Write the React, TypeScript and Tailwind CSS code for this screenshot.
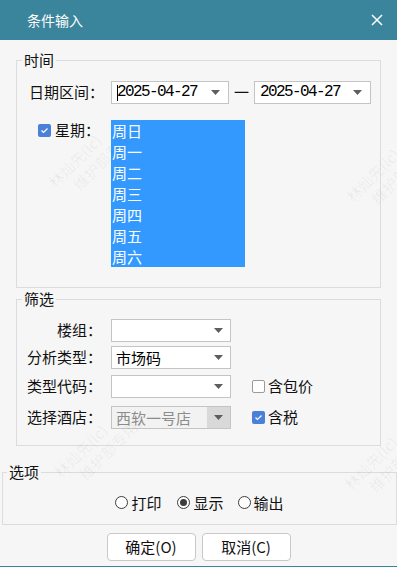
import React from "react";

const Arrow = () => (
  <svg width="9" height="5" viewBox="0 0 9 5" className="block">
    <polygon points="0,0 9,0 4.5,5" fill="#5b605b" />
  </svg>
);

const CheckBox = ({ checked }: { checked: boolean }) =>
  checked ? (
    <span className="inline-flex h-[13px] w-[13px] items-center justify-center rounded-[2px] bg-[#4a80d8]">
      <svg width="9" height="7" viewBox="0 0 9 7">
        <polyline points="1.5,3.5 3.5,5.5 7.5,1.5" fill="none" stroke="#fff" strokeWidth="1.2" />
      </svg>
    </span>
  ) : (
    <span className="inline-block h-[13px] w-[13px] rounded-[2px] border border-[#9a9a9a] bg-white" />
  );

const Radio = ({ checked }: { checked: boolean }) => (
  <span className="inline-flex h-[13px] w-[13px] items-center justify-center rounded-full border border-[#3c3c3c] bg-white">
    {checked && <span className="h-[7px] w-[7px] rounded-full bg-[#3c3c3c]" />}
  </span>
);

const Select = ({ value, disabled }: { value?: string; disabled?: boolean }) => (
  <div
    className={`flex h-[23px] w-[120px] items-stretch border border-[#c4c4c4] ${
      disabled ? "bg-[#f2f2f2]" : "bg-white"
    }`}
  >
    <div className={`flex-1 pl-[4px] leading-[21px] ${disabled ? "text-[#8c8c8c]" : "text-black"}`}>
      {value}
    </div>
    <div className={`flex w-[23px] items-center justify-center ${disabled ? "bg-[#d9d9d9]" : ""}`}>
      <Arrow />
    </div>
  </div>
);

const DateBox = ({ cursor, w }: { cursor?: boolean; w: string }) => (
  <div className={`flex h-[23px] ${w} items-center border border-[#c4c4c4] bg-white`}>
    <div className="flex flex-1 items-center pl-[5px]">
      {cursor && <span className="mr-[-1px] inline-block h-[16px] w-[1px] bg-black" />}
      <span
        className="text-[16px] leading-[21px] tracking-[-1.6px] text-black"
        style={{ fontFamily: '"Liberation Mono", monospace' }}
      >
        2025-04-27
      </span>
    </div>
    <div className="flex w-[22px] items-center justify-center pr-[4px]">
      <Arrow />
    </div>
  </div>
);

const Watermark = ({ className }: { className: string }) => (
  <div
    className={`pointer-events-none absolute whitespace-nowrap text-[15px] leading-[19px] text-[rgba(0,0,0,0.06)] ${className}`}
    style={{ transform: "rotate(-45deg)", transformOrigin: "0 0" }}
  >
    <div>林灿先(lc)</div>
    <div className="pl-[16px]">维护部专用2</div>
  </div>
);

export default function App() {
  const days = ["周日", "周一", "周二", "周三", "周四", "周五", "周六"];
  return (
    <div
      className="relative flex h-[567px] w-[397px] flex-col overflow-hidden bg-[#f6f6f6] text-[15px] text-[#111]"
      style={{ fontFamily: '"Noto Sans CJK SC", "Noto Sans", sans-serif' }}
    >
      {/* title bar */}
      <div className="flex h-[40px] shrink-0 items-center justify-between bg-[#3b859c] pl-[27px] pr-[14px]">
        <span className="text-[14px] text-white">条件输入</span>
        <svg width="12" height="12" viewBox="0 0 12 12">
          <path d="M1 1 L11 11 M11 1 L1 11" stroke="#fff" strokeWidth="1.5" />
        </svg>
      </div>

      {/* 时间 */}
      <fieldset className="mx-[16px] mt-[10px] border border-[#dcdcdc] pb-[20px] pt-[11px]">
        <legend className="ml-[5px] px-[2px] leading-[20px]">时间</legend>
        <div className="flex items-center">
          <div className="w-[94px] pl-[12px]">日期区间：</div>
          <DateBox cursor w="w-[118px]" />
          <span className="mx-[5px] w-[15px] text-center">一</span>
          <DateBox w="w-[117px]" />
        </div>
        <div className="mt-[16px] flex">
          <div className="flex h-[21px] w-[94px] items-center pl-[21px]">
            <CheckBox checked />
            <span className="ml-[4px]">星期：</span>
          </div>
          <div className="w-[134px] bg-[#3399ff] pl-[1px] text-white">
            {days.map((d) => (
              <div key={d} className="h-[21px] leading-[21px]">
                {d}
              </div>
            ))}
          </div>
        </div>
      </fieldset>

      {/* 筛选 */}
      <fieldset className="mx-[16px] mt-[1px] border border-[#dcdcdc] pb-[16px] pt-[10px]">
        <legend className="ml-[5px] px-[2px] leading-[20px]">筛选</legend>
        <div className="flex items-center">
          <div className="w-[85px] text-right">楼组：</div>
          <div className="ml-[9px]">
            <Select />
          </div>
        </div>
        <div className="mt-[4px] flex items-center">
          <div className="w-[85px] text-right">分析类型：</div>
          <div className="ml-[9px]">
            <Select value="市场码" />
          </div>
        </div>
        <div className="mt-[6px] flex items-center">
          <div className="w-[85px] text-right">类型代码：</div>
          <div className="ml-[9px]">
            <Select />
          </div>
          <div className="ml-[21px] flex items-center">
            <CheckBox checked={false} />
            <span className="ml-[3px]">含包价</span>
          </div>
        </div>
        <div className="mt-[8px] flex items-center">
          <div className="w-[85px] text-right">选择酒店：</div>
          <div className="ml-[9px]">
            <Select value="西软一号店" disabled />
          </div>
          <div className="ml-[21px] flex items-center">
            <CheckBox checked />
            <span className="ml-[3px]">含税</span>
          </div>
        </div>
      </fieldset>

      {/* 选项 */}
      <fieldset className="ml-[2px] mr-0 mt-[16px] border border-[#dcdcdc] pb-[11px] pt-[10px]">
        <legend className="ml-[4px] px-[2px] leading-[20px]">选项</legend>
        <div className="flex h-[21px] items-center justify-center leading-[21px]">
          <div className="flex items-center">
            <Radio checked={false} />
            <span className="ml-[3px]">打印</span>
          </div>
          <div className="ml-[16px] flex items-center">
            <Radio checked />
            <span className="ml-[3px]">显示</span>
          </div>
          <div className="ml-[14px] flex items-center">
            <Radio checked={false} />
            <span className="ml-[3px]">输出</span>
          </div>
        </div>
      </fieldset>

      {/* buttons */}
      <div className="mt-[8px] flex justify-center gap-[6px]">
        <button className="h-[28px] w-[89px] rounded-[4px] border border-[#c8c8c8] bg-white text-[15px] leading-[26px]">
          确定(O)
        </button>
        <button className="h-[28px] w-[89px] rounded-[4px] border border-[#c8c8c8] bg-white text-[15px] leading-[26px]">
          取消(C)
        </button>
      </div>

      <div className="mt-auto h-[1px] w-full bg-[#3b859c]" />

      <Watermark className="left-[44px] top-[178px]" />
      <Watermark className="left-[342px] top-[192px]" />
      <Watermark className="left-[50px] top-[468px]" />
      <Watermark className="left-[340px] top-[480px]" />
    </div>
  );
}
